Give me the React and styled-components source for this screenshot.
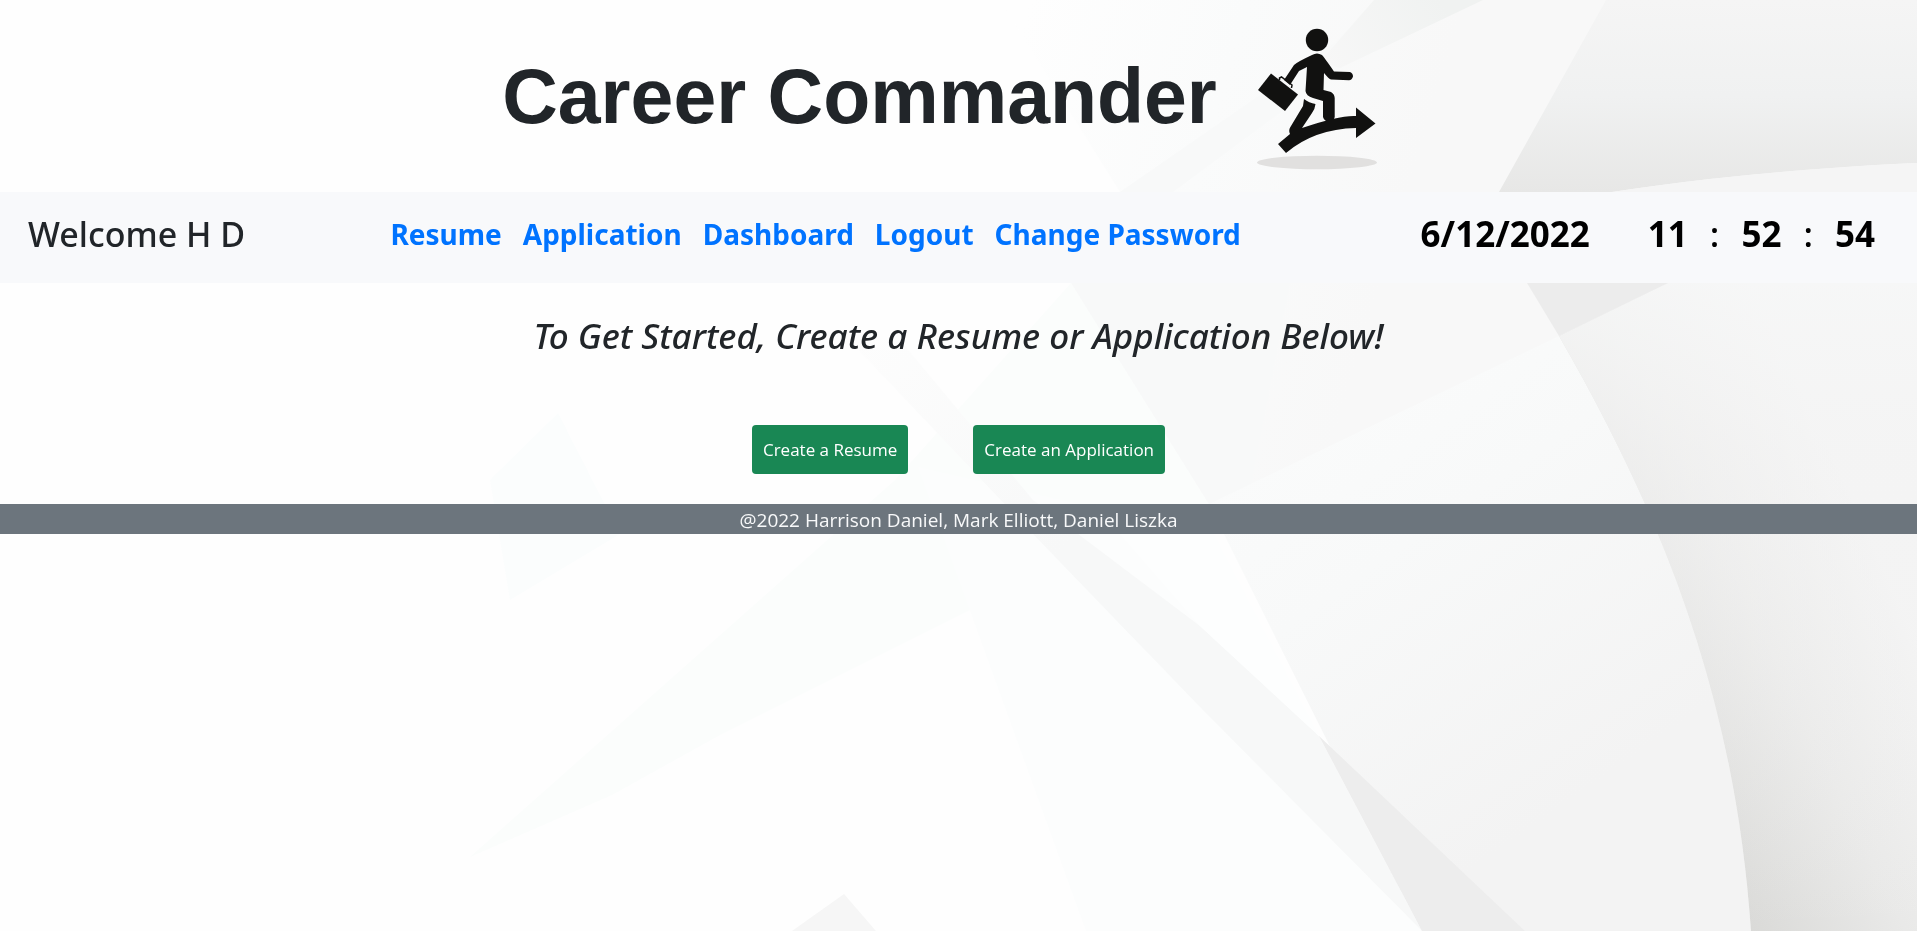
import React from 'react';
import styled, { createGlobalStyle } from 'styled-components';

const GlobalStyle = createGlobalStyle`
  * { box-sizing: border-box; }
  body {
    margin: 0;
    background: #fefefe;
    color: #212529;
    font-family: 'Segoe UI', 'Noto Sans', sans-serif;
  }
`;

const Backdrop = styled.svg`
  position: fixed;
  inset: 0;
  z-index: -1;
  width: 100%;
  height: 100%;
`;

const Header = styled.header`
  display: flex;
  align-items: center;
  justify-content: center;
  height: 192px;
`;

const Title = styled.h1`
  margin: 0;
  font: bold 77px/92px Arial, 'Liberation Sans', sans-serif;
`;

const Logo = styled.svg`
  width: 198px;
  height: 192px;
`;

const Navbar = styled.nav`
  display: grid;
  grid-template-columns: 4fr auto 7fr;
  align-items: center;
  height: 91px;
  padding: 0 42px 8px 28px;
  background: #f8f9fb;
`;

const Welcome = styled.div`
  font-size: 34px;
  font-weight: 500;
  line-height: 44px;
`;

const Links = styled.div`
  display: flex;
  gap: 21px;
`;

const NavLink = styled.a`
  color: #0073ff;
  font-size: 28px;
  font-weight: 700;
  line-height: 44px;
  text-decoration: none;
`;

const Clock = styled.div`
  display: flex;
  justify-content: flex-end;
  gap: 58px;
  color: #000;
  font-size: 35px;
  font-weight: 700;
  line-height: 44px;
`;

const Time = styled.div`
  display: flex;
  gap: 22px;
`;

const Colon = styled.span`
  font-weight: 500;
`;

const Main = styled.main`
  display: flex;
  flex-direction: column;
  align-items: center;
  padding: 31px 0 30px;
`;

const Prompt = styled.h2`
  margin: 0 0 67px;
  font-size: 35px;
  font-style: italic;
  font-weight: 500;
  line-height: 44px;
`;

const Actions = styled.div`
  display: flex;
  gap: 65px;
`;

const CreateButton = styled.button`
  height: 49px;
  padding: 0 11px;
  border: 0;
  border-radius: 4px;
  background: #198754;
  color: #fff;
  font-family: 'Segoe UI', 'Open Sans', sans-serif;
  font-size: 17px;
`;

const Footer = styled.footer`
  padding-top: 2px;
  background: #6c757d;
  color: #f8f9fa;
  font-family: 'Segoe UI', 'Open Sans', sans-serif;
  font-size: 19px;
  line-height: 28px;
  text-align: center;
`;

const links = ['Resume', 'Application', 'Dashboard', 'Logout', 'Change Password'];

function PaperBackdrop() {
  return (
    <Backdrop viewBox="0 0 1917 931" preserveAspectRatio="none" aria-hidden="true">
      <defs>
        <linearGradient id="facet" x1="0" y1="0" x2="0" y2="1">
          <stop offset="0" stopColor="#f5f5f5" />
          <stop offset="0.5" stopColor="#f0f1f1" />
          <stop offset="1" stopColor="#e7e7e6" />
        </linearGradient>
        <linearGradient id="sheet" gradientUnits="userSpaceOnUse" x1="1150" y1="350" x2="1500" y2="850">
          <stop offset="0" stopColor="#fcfdfd" />
          <stop offset="0.5" stopColor="#f8f9f9" />
          <stop offset="1" stopColor="#f3f3f3" />
        </linearGradient>
        <linearGradient id="upper" gradientUnits="userSpaceOnUse" x1="1000" y1="100" x2="1400" y2="220">
          <stop offset="0" stopColor="#fefefe" />
          <stop offset="0.5" stopColor="#fafbfb" />
          <stop offset="1" stopColor="#f8f8f8" />
        </linearGradient>
        <linearGradient id="band" gradientUnits="userSpaceOnUse" x1="850" y1="340" x2="1050" y2="560">
          <stop offset="0" stopColor="#fdfdfd" />
          <stop offset="1" stopColor="#f7f8f8" />
        </linearGradient>
        <linearGradient id="shade" gradientUnits="userSpaceOnUse" x1="1330" y1="70" x2="1440" y2="0">
          <stop offset="0" stopColor="#f7f7f7" />
          <stop offset="1" stopColor="#f0f2f1" />
        </linearGradient>
        <linearGradient id="fold" gradientUnits="userSpaceOnUse" x1="1680" y1="780" x2="1930" y2="660">
          <stop offset="0" stopColor="#dadad8" />
          <stop offset="0.5" stopColor="#e9e9e8" />
          <stop offset="1" stopColor="#f3f3f3" />
        </linearGradient>
        <linearGradient id="foldFade" x1="0" y1="0" x2="0" y2="1">
          <stop offset="0" stopColor="#f8f9f9" stopOpacity="1" />
          <stop offset="0.35" stopColor="#f5f5f5" stopOpacity="0.6" />
          <stop offset="1" stopColor="#f4f4f4" stopOpacity="0" />
        </linearGradient>
      </defs>
      <path d="M1000 0H1917V504H1209L1033 420L1120 192Z" fill="url(#upper)" />
      <path d="M1374 0H1481L1347 63L1173 192H1120L1335 43Z" fill="#f8f9f9" />
      <path d="M1374 0H1483L1340 68L1320 62Z" fill="url(#shade)" />
      <path d="M470 857L895 480L1071 283L1209 504L1010 590L720 735L612 795Z" fill="#fbfdfc" />
      <path d="M558 413L620 534L510 600L490 480Z" fill="#fbfdfd" />
      <path d="M918 467L1209 534L1422 931H1086Z" fill="#fcfdfd" />
      <path d="M1071 283H1290L1250 490L1209 504Z" fill="#f8f9f9" />
      <path d="M1209 504L1559 336C1665 520 1735 700 1751 931H1422Z" fill="url(#sheet)" />
      <path d="M849 340H900L1033 500L1200 626L1319 736L1422 931L1200 707L1033 534Z" fill="url(#band)" />
      <path d="M1214 534L1319 736L1200 626L1120 534Z" fill="#fdfefe" />
      <path d="M1319 736L1525 931H1422Z" fill="#ededed" />
      <path d="M844 894L876 931H792Z" fill="#f6f6f6" />
      <path d="M1559 336C1665 520 1735 700 1751 931H1917V192H1668V283Z" fill="url(#fold)" />
      <path d="M1559 336C1665 520 1735 700 1751 931H1917V192H1668V283Z" fill="url(#foldFade)" />
      <path d="M1527 283H1668L1559 336Z" fill="#ececec" />
      <path d="M1606 0H1917V163Q1750 171 1612 192H1499Z" fill="url(#facet)" />
      <path d="M1612 192Q1750 171 1917 163V192Z" fill="#f5f5f5" />
    </Backdrop>
  );
}

function RunnerLogo() {
  return (
    <Logo viewBox="1217 0 198 192" role="img" aria-label="Runner with a briefcase on a rising arrow">
      <ellipse cx="1317" cy="162.500" rx="60" ry="6.700" fill="#e1e0df" />
      <g fill="#111110">
        <circle cx="1317" cy="40" r="11.200" />
        <path d="M1312 55Q1317 52 1322 55Q1324 57 1334 71.500L1350 72Q1353 73 1353 76.500Q1352 80 1349 80.300L1331 79.500Q1329 79 1324 73L1323.500 90L1331 92Q1334.500 94 1334.700 98V117Q1334 121 1329 122Q1324 121 1323 117V101L1313 98Q1306 96 1305.500 91L1307 67L1299 71L1290 85L1284 80L1294 65Q1297 62 1312 55Z" />
        <path d="M1304 99Q1309 103 1315.500 104Q1315 109 1312 113L1302 128Q1340 115 1356 116V107.500L1375.500 123.500L1356 138V128Q1314 129 1286 153L1278 144L1290 134Q1288 130 1291 126L1303 106Z" />
        <path d="M1271 73.500L1298 94.500L1285 111L1258 90Z" />
      </g>
      <path d="M1279.500 80V78L1281.500 77L1292 85L1291.500 88" fill="none" stroke="#111110" strokeWidth="1.500" />
    </Logo>
  );
}

export default function App() {
  return (
    <>
      <GlobalStyle />
      <PaperBackdrop />
      <Header>
        <Title>Career Commander</Title>
        <RunnerLogo />
      </Header>
      <Navbar>
        <Welcome>Welcome H D</Welcome>
        <Links>
          {links.map((label) => (
            <NavLink key={label} href="#">{label}</NavLink>
          ))}
        </Links>
        <Clock>
          <span>6/12/2022</span>
          <Time>
            <span>11</span>
            <Colon>:</Colon>
            <span>52</span>
            <Colon>:</Colon>
            <span>54</span>
          </Time>
        </Clock>
      </Navbar>
      <Main>
        <Prompt>To Get Started, Create a Resume or Application Below!</Prompt>
        <Actions>
          <CreateButton type="button">Create a Resume</CreateButton>
          <CreateButton type="button">Create an Application</CreateButton>
        </Actions>
      </Main>
      <Footer>@2022 Harrison Daniel, Mark Elliott, Daniel Liszka</Footer>
    </>
  );
}
